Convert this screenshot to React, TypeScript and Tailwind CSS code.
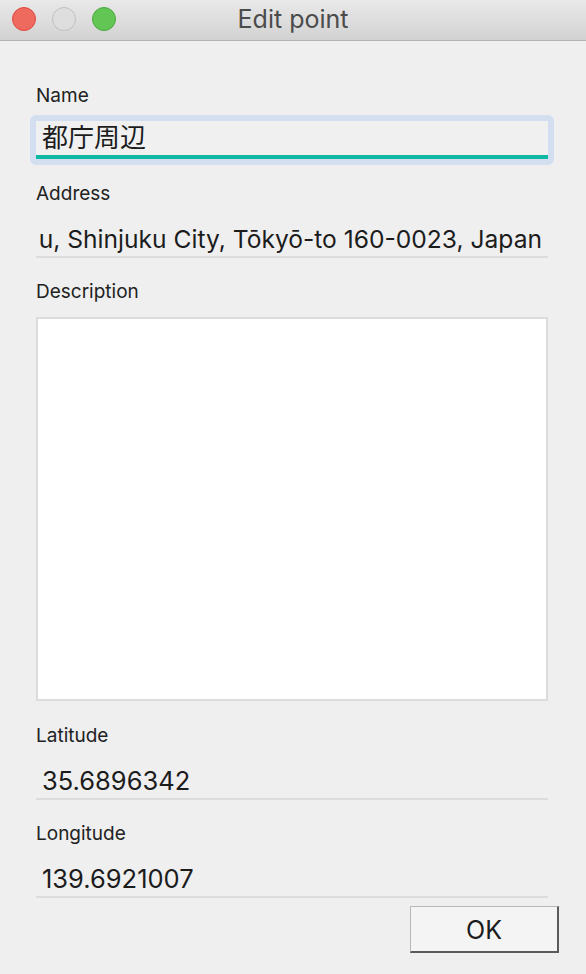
import React from "react";

const font = { fontFamily: "Inter, 'Noto Sans CJK JP', sans-serif" };

function Label({ children, mt }: { children: React.ReactNode; mt: string }) {
  return (
    <div className={`${mt} h-[24px] text-[19px] leading-[24px] text-[#222]`}>{children}</div>
  );
}

function LineField({ value, pad = true }: { value: string; pad?: boolean }) {
  return (
    <div
      className={`flex h-[52px] whitespace-nowrap border-b-2 border-[#dcdcdc] pb-[3px] pt-[19px] leading-[28px] text-[#1c1c1c] ${pad ? "pl-[6px] text-[25.5px]" : "justify-end pr-[6px] text-[24.6px]"}`}
    >
      <span>{value}</span>
    </div>
  );
}

export default function App() {
  return (
    <div className="flex h-[974px] w-[586px] flex-col overflow-hidden bg-[#efefef]" style={font}>
      {/* title bar */}
      <div className="relative flex h-[41px] items-center justify-center border-b border-[#b4b4b4] bg-gradient-to-b from-[#e9e9e9] to-[#d2d2d2]">
        <div className="absolute left-[12px] top-[7px] flex gap-[16px]">
          <span className="h-[24px] w-[24px] rounded-full border border-[#e0483e] bg-[#ee6a5f]" />
          <span className="h-[24px] w-[24px] rounded-full border border-[#c0c0c0] bg-[#dedede]" />
          <span className="h-[24px] w-[24px] rounded-full border border-[#4aa93d] bg-[#62c554]" />
        </div>
        <span className="text-[25px] text-[#4b4b4b]">Edit point</span>
      </div>

      <div className="flex flex-col pl-[36px] pr-[38px]">
        <Label mt="mt-[43px]">Name</Label>
        <div className="-mx-[6px] mt-[7px] rounded-[6px] bg-[#d3dff0] p-[6px]">
          <div className="h-[38px] border-b-4 border-[#0fb8a3] bg-[#f0f0f0] pl-[6px] text-[26px] leading-[33px] text-[#1c1c1c]">
            都庁周辺
          </div>
        </div>

        <Label mt="mt-[17px]">Address</Label>
        <LineField pad={false} value="u, Shinjuku City, Tōkyō-to 160-0023, Japan" />

        <Label mt="mt-[22px]">Description</Label>
        <div className="mt-[13px] h-[384px] border-2 border-[#dcdcdc] bg-white" />

        <Label mt="mt-[23px]">Latitude</Label>
        <LineField value="35.6896342" />

        <Label mt="mt-[22px]">Longitude</Label>
        <LineField value="139.6921007" />

        <div className="-mr-[11px] mt-[8px] flex justify-end">
          <button className="h-[47px] w-[149px] border-b-2 border-l border-r-2 border-t border-b-[#5a5a5a] border-l-[#b8b8b8] border-r-[#5a5a5a] border-t-[#b8b8b8] bg-[#f4f4f4] pt-[4px] text-[25px] text-[#1c1c1c]">
            OK
          </button>
        </div>
      </div>
    </div>
  );
}
